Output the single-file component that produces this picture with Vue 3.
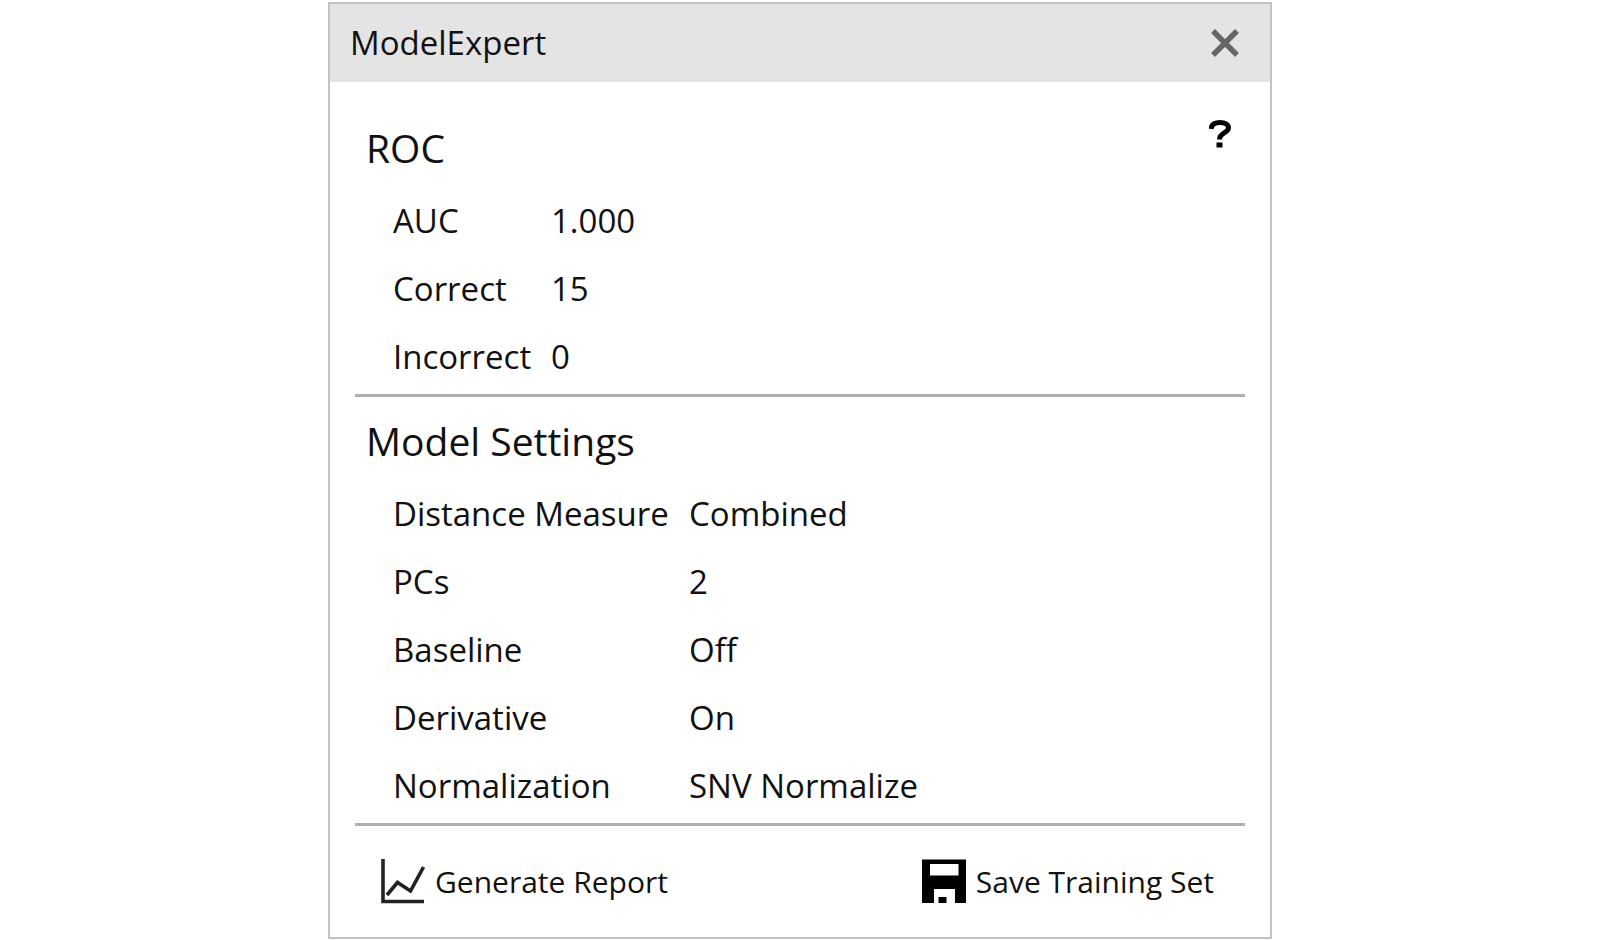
<template>
  <div class="page">
    <section v-if="open" class="dialog" role="dialog" aria-labelledby="dialog-title">
      <header class="dialog-header">
        <h1 id="dialog-title">ModelExpert</h1>
        <button type="button" class="icon-btn" aria-label="Close" @click="open = false">
          <svg width="28" height="28" viewBox="0 0 28 28">
            <path d="M2 2 L26 26 M26 2 L2 26" fill="none" stroke="#666" stroke-width="5.4" />
          </svg>
        </button>
      </header>

      <div class="dialog-body">
        <!-- ROC results -->
        <div class="section">
          <div class="section-head">
            <h2>ROC</h2>
            <button type="button" class="icon-btn" aria-label="Help">
              <svg width="22" height="28" viewBox="0 0 22 28">
                <path d="M2 9 C2.500 4.500 6 2.500 11 2.500 C16 2.500 19.500 4.500 19.500 8 C19.500 13 10.500 12.500 10.500 19.500" fill="none" stroke="#000" stroke-width="5" />
                <rect x="7.500" y="22.500" width="6" height="5" fill="#000" />
              </svg>
            </button>
          </div>
          <table class="values roc">
            <tbody>
              <tr v-for="row in roc" :key="row.label">
                <th scope="row">{{ row.label }}</th>
                <td>{{ row.value }}</td>
              </tr>
            </tbody>
          </table>
        </div>

        <!-- Model settings -->
        <div class="section">
          <div class="section-head">
            <h2>Model Settings</h2>
          </div>
          <table class="values settings">
            <tbody>
              <tr v-for="row in settings" :key="row.label">
                <th scope="row">{{ row.label }}</th>
                <td>{{ row.value }}</td>
              </tr>
            </tbody>
          </table>
        </div>

        <footer class="actions">
          <button type="button" class="action-btn">
            <svg width="44" height="46" viewBox="0 0 44 46">
              <path d="M2 0 V42.500 H43" fill="none" stroke="#222" stroke-width="3.600" />
              <path d="M6 36 L16.500 23.500 L29.500 32 L42.500 8" fill="none" stroke="#222" stroke-width="3.600" />
            </svg>
            <span>Generate Report</span>
          </button>
          <button type="button" class="action-btn">
            <svg width="44" height="46" viewBox="0 0 44 46">
              <path fill-rule="evenodd" d="M0 0.500 H44 V44 H33 V30 H12 V44 H0 Z M8 5 V16.500 H36.500 V5 Z" fill="#000" />
              <rect x="16.500" y="38" width="8" height="6" fill="#000" />
            </svg>
            <span>Save Training Set</span>
          </button>
        </footer>
      </div>
    </section>
  </div>
</template>

<script setup>
import { ref } from 'vue'

const open = ref(true)

const roc = [
  { label: 'AUC', value: '1.000' },
  { label: 'Correct', value: '15' },
  { label: 'Incorrect', value: '0' },
]

const settings = [
  { label: 'Distance Measure', value: 'Combined' },
  { label: 'PCs', value: '2' },
  { label: 'Baseline', value: 'Off' },
  { label: 'Derivative', value: 'On' },
  { label: 'Normalization', value: 'SNV Normalize' },
]
</script>

<style>
body {
  background: #fff;
}
</style>

<style scoped>
.page {
  padding-top: 2px;
  font-family: "Segoe UI", "Open Sans", "Noto Sans", sans-serif;
  font-size: 33px;
  color: #111;
}

.dialog {
  box-sizing: border-box;
  width: 59%;
  min-width: 720px;
  margin: 0 auto;
  border: 2px solid #c3c3c3;
  background: #fff;
}

/* Title bar */
.dialog-header {
  display: flex;
  align-items: center;
  justify-content: space-between;
  padding: 0 31px 0 20px;
  background: #e4e4e4;
}

.dialog-header h1 {
  margin: 0;
  font-size: 33px;
  font-weight: 400;
  line-height: 78px;
}

.icon-btn {
  display: flex;
  padding: 0;
  border: 0;
  background: none;
  cursor: pointer;
}

/* Sections */
.dialog-body {
  padding: 38px 25px 0;
}

.section {
  margin-bottom: 16px;
  padding-bottom: 3px;
  border-bottom: 3px solid #b0b0b0;
}

.section-head {
  display: flex;
  align-items: flex-start;
  justify-content: space-between;
  margin-bottom: 11px;
  padding: 0 14px 0 11px;
}

.section-head h2 {
  margin: 0;
  font-size: 39px;
  font-weight: 400;
  line-height: 56px;
}

.values {
  margin-left: 38px;
  border-collapse: collapse;
}

.values th,
.values td {
  padding: 0;
  font-weight: 400;
  line-height: 68px;
  text-align: left;
  white-space: nowrap;
}

.roc th {
  width: 158px;
}

.settings th {
  width: 296px;
}

/* Bottom buttons */
.actions {
  display: flex;
  justify-content: space-between;
  padding: 4px 31px 19px 26px;
}

.action-btn {
  display: flex;
  align-items: center;
  gap: 10px;
  padding: 0;
  border: 0;
  background: none;
  color: inherit;
  font: inherit;
  font-size: 30px;
  line-height: 72px;
  white-space: nowrap;
  cursor: pointer;
}
</style>
